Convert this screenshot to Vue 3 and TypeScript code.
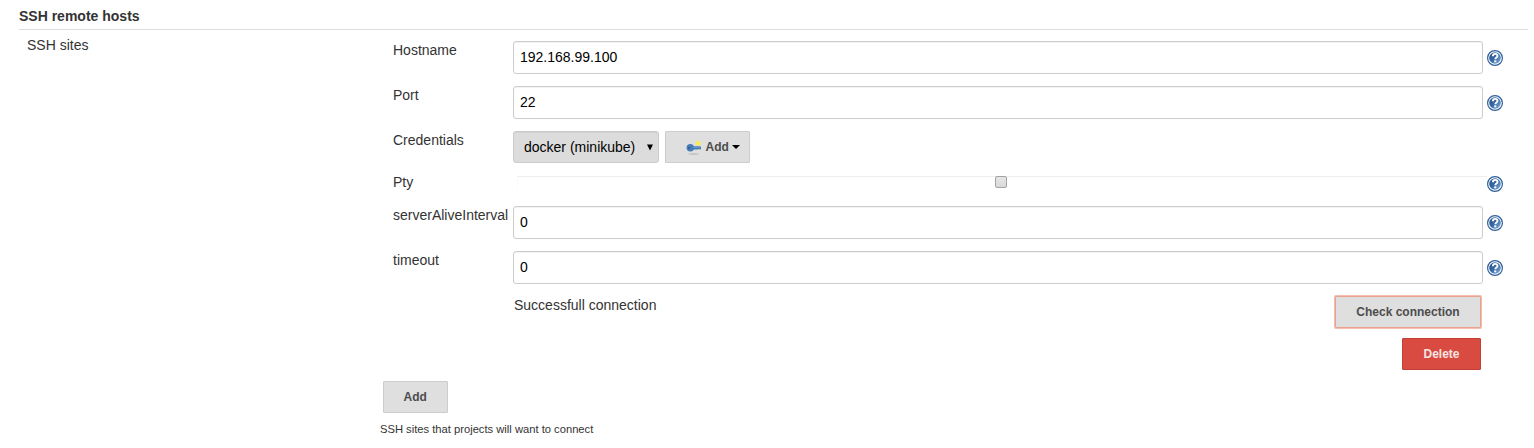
<script setup lang="ts">
import { ref } from 'vue'

interface Field {
  label: string
  kind: 'text' | 'credentials' | 'checkbox'
  value: string
}

const fields = ref<Field[]>([
  { label: 'Hostname', kind: 'text', value: '192.168.99.100' },
  { label: 'Port', kind: 'text', value: '22' },
  { label: 'Credentials', kind: 'credentials', value: 'docker (minikube)' },
  { label: 'Pty', kind: 'checkbox', value: '' },
  { label: 'serverAliveInterval', kind: 'text', value: '0' },
  { label: 'timeout', kind: 'text', value: '0' },
])
</script>

<template>
  <main class="config">
    <svg class="defs" width="0" height="0" aria-hidden="true">
      <defs>
        <linearGradient id="helpFill" x1="0" y1="0" x2="1" y2="1">
          <stop offset="0" stop-color="#244d86" />
          <stop offset="0.5" stop-color="#376ba8" />
          <stop offset="1" stop-color="#8fb4da" />
        </linearGradient>
        <radialGradient id="spark">
          <stop offset="0" stop-color="#fff46a" />
          <stop offset="0.6" stop-color="#f8ec50" />
          <stop offset="1" stop-color="#f8ec50" stop-opacity="0" />
        </radialGradient>
      </defs>
    </svg>
    <h2 class="title">SSH remote hosts</h2>
    <div class="section">
      <div class="section-label">SSH sites</div>
      <div class="section-body">
        <div class="site">
          <div v-for="f in fields" :key="f.label" class="row" :class="f.kind">
            <label class="label">{{ f.label }}</label>
            <input v-if="f.kind === 'text'" v-model="f.value" class="input" type="text" />
            <div v-else-if="f.kind === 'credentials'" class="creds">
              <button class="select" type="button">
                <span>{{ f.value }}</span>
                <svg width="6" height="7" viewBox="0 0 6 7"><path d="M0 0.500h6L3 6.500z" fill="#000" /></svg>
              </button>
              <button class="btn add-cred" type="button">
                <svg class="key" width="16" height="16" viewBox="0 0 16 16">
                  <ellipse cx="7.500" cy="15" rx="5.500" ry="0.700" fill="#a8a8a8" opacity="0.600" />
                  <circle cx="4.300" cy="8.800" r="3.700" fill="#477bb6" />
                  <path d="M7 7.200h7.200l.8.900v1.600l-.8.900h-1l-.6-.6-.8.600H7z" fill="#477bb6" />
                  <path d="M7 8.300h7" stroke="#7ba6d4" stroke-width="0.800" />
                  <circle cx="2.800" cy="8.900" r="0.900" fill="#28568f" />
                  <circle cx="12.200" cy="4.200" r="3" fill="url(#spark)" />
                </svg>
                <span>Add</span>
                <svg width="8" height="4" viewBox="0 0 8 4"><path d="M0 0h8L4 4z" fill="#000" /></svg>
              </button>
            </div>
            <div v-else class="check-cell"><span class="check" role="checkbox" aria-checked="false"></span></div>
            <svg v-if="f.kind !== 'credentials'" class="help" width="16" height="16" viewBox="0 0 16 16">
              <circle cx="8" cy="8" r="7.400" fill="#fff" stroke="#2f5f9b" stroke-width="1.200" />
              <circle cx="8" cy="8" r="5.800" fill="url(#helpFill)" />
              <path d="M5.800 6.300C5.900 4.600 6.800 3.900 8.100 3.900c1.400 0 2.400.8 2.400 2 0 1.700-2.200 1.700-2.200 3.400" fill="none" stroke="#fff" stroke-width="1.900" />
              <rect x="7.200" y="10.400" width="2.100" height="1.900" fill="#fff" />
            </svg>
          </div>
          <div class="status-row">
            <span class="status">Successfull connection</span>
            <button class="btn validate" type="button">Check connection</button>
          </div>
          <div class="delete-row">
            <button class="btn danger" type="button">Delete</button>
          </div>
        </div>
        <button class="btn add-site" type="button">Add</button>
        <p class="hint">SSH sites that projects will want to connect</p>
      </div>
    </div>
  </main>
</template>

<style>
body {
  margin: 0;
  background: #fff;
}
</style>

<style scoped>
.config {
  box-sizing: border-box;
  height: 448px;
  padding: 8px 6px 0 19px;
  overflow: hidden;
  color: #333;
  font: 14px/16px "Liberation Sans", Arial, sans-serif;
}
.defs {
  position: absolute;
}
.title {
  margin: 0;
  padding-bottom: 5px;
  border-bottom: 1px solid #dcdfdf;
  font-size: 14px;
  line-height: 16px;
}
.section {
  display: grid;
  grid-template-columns: 361px 1fr;
}
.section-label {
  padding: 7px 0 0 8px;
}
.section-body {
  padding-top: 11px;
}
.site {
  margin-left: 13px;
}
.row {
  display: grid;
  grid-template-columns: 120px 970px 16px;
  height: 45px;
  align-items: start;
}
.row.credentials {
  height: 42px;
}
.row.checkbox {
  height: 33px;
}
.label {
  padding-top: 1px;
  white-space: nowrap;
}
.input {
  box-sizing: border-box;
  width: 970px;
  height: 33px;
  margin: 0;
  padding: 6px 6px 7px;
  border: 1px solid #ccc;
  border-radius: 3px;
  outline: 0;
  background: #fff;
  box-shadow: inset 0 1px 1px rgba(0, 0, 0, 0.055);
  color: #000;
  font: inherit;
}
.help {
  display: block;
  margin: 9px 0 0 4px;
}
.checkbox .help {
  margin-top: 3px;
}
.creds {
  display: flex;
  gap: 6px;
}
button {
  box-sizing: border-box;
  margin: 0;
  font-family: inherit;
}
.select {
  display: flex;
  align-items: center;
  justify-content: space-between;
  width: 146px;
  height: 32px;
  padding: 0 5px 0 10px;
  border: 1px solid #ccc;
  border-radius: 3px;
  background: #dcdcdc;
  box-shadow: inset 0 1px 1px rgba(0, 0, 0, 0.055);
  color: #000;
  font-size: 14px;
  line-height: 16px;
}
.btn {
  display: flex;
  align-items: center;
  justify-content: center;
  height: 32px;
  padding: 0;
  border: 1px solid #ccc;
  border-radius: 1px;
  background: #dfdfdf;
  color: #4d4d4d;
  font-size: 12px;
  font-weight: bold;
  line-height: 14px;
}
.add-cred {
  justify-content: flex-start;
  width: 85px;
  padding-left: 20px;
}
.key {
  margin-right: 3.6px;
}
.add-cred span {
  margin-right: 3.4px;
}
.check-cell {
  display: flex;
  justify-content: center;
  width: 970px;
  height: 12px;
  margin: 3px 0 0 4px;
  border-top: 1px solid #eee;
  border-left: 1px solid #fafafa;
  box-sizing: border-box;
}
.check {
  box-sizing: border-box;
  width: 12px;
  height: 12px;
  margin: -1px 4px 0 0;
  border: 1px solid #a3a3a3;
  border-radius: 2px;
  background: linear-gradient(#e6e6e6, #d9d9d9);
}
.status-row {
  display: flex;
  align-items: flex-start;
  justify-content: space-between;
  width: 967px;
  height: 42px;
  margin-left: 121px;
}
.status {
  padding-top: 1px;
}
.validate {
  width: 146px;
  border-color: #e9a18d;
  box-shadow: 0 0 0 1px rgba(240, 145, 120, 0.6);
}
.delete-row {
  display: flex;
  justify-content: flex-end;
  width: 1088px;
  height: 43px;
}
.danger {
  width: 79px;
  border-color: #c23f35;
  background: #d94a40;
  color: #f5e5e4;
}
.add-site {
  width: 65px;
  margin-left: 3px;
  padding-right: 0.6px;
}
.hint {
  margin: 9px 0 0;
  font-size: 11.2px;
  line-height: 14px;
}
</style>
